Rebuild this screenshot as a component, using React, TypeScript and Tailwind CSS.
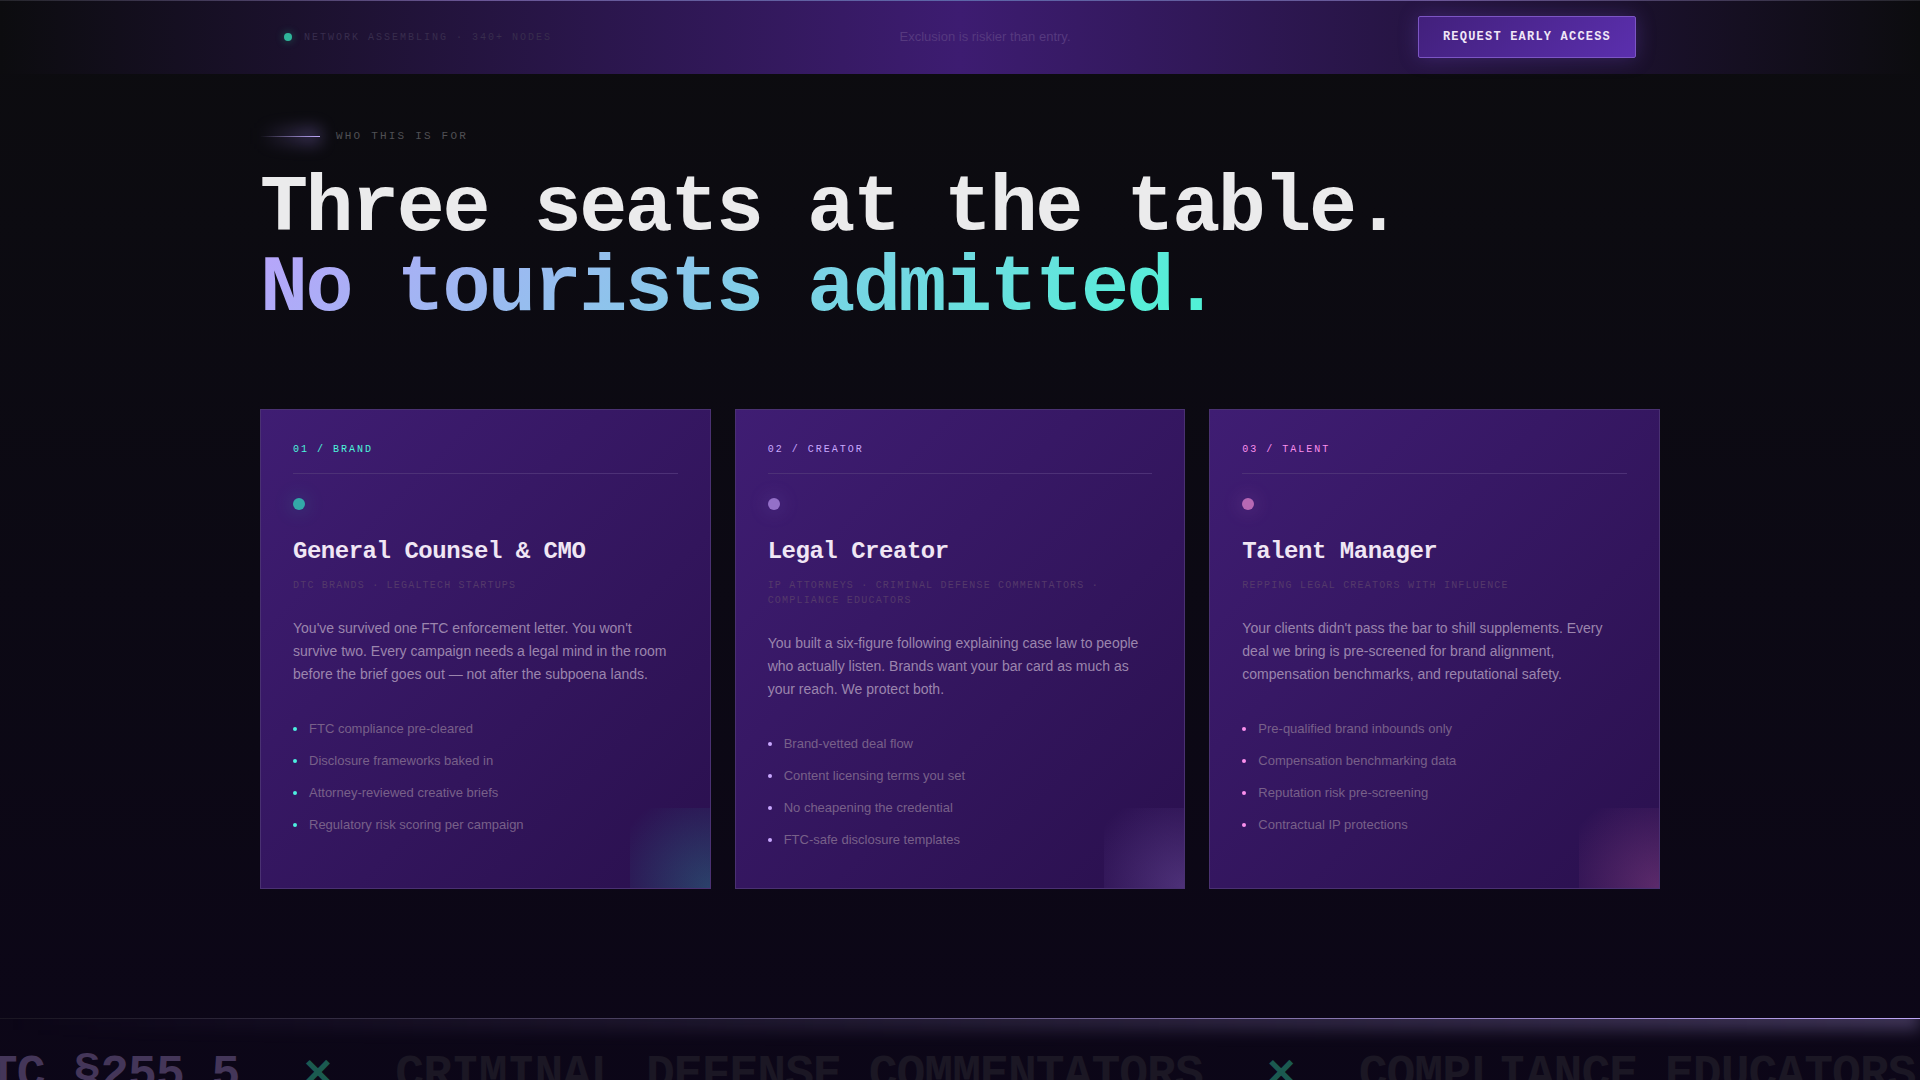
type Seat = {
  kicker: string
  title: string
  audience: string
  body: string
  points: string[]
  text: string
  dot: string
  bullet: string
  glow: string
}

const seats: Seat[] = [
  {
    kicker: "01 / BRAND",
    title: "General Counsel & CMO",
    audience: "DTC Brands · LegalTech Startups",
    body: "You've survived one FTC enforcement letter. You won't survive two. Every campaign needs a legal mind in the room before the brief goes out — not after the subpoena lands.",
    points: [
      "FTC compliance pre-cleared",
      "Disclosure frameworks baked in",
      "Attorney-reviewed creative briefs",
      "Regulatory risk scoring per campaign",
    ],
    text: "text-[#4cf5dc]",
    dot: "bg-[#33a9a8] shadow-[0_0_20px_rgba(45,212,191,0.3)]",
    bullet: "bg-[#4cf0e0]",
    glow: "bg-[radial-gradient(circle_at_bottom_right,#2dd4bf,transparent_90%)]",
  },
  {
    kicker: "02 / CREATOR",
    title: "Legal Creator",
    audience: "IP Attorneys · Criminal Defense Commentators · Compliance Educators",
    body: "You built a six-figure following explaining case law to people who actually listen. Brands want your bar card as much as your reach. We protect both.",
    points: [
      "Brand-vetted deal flow",
      "Content licensing terms you set",
      "No cheapening the credential",
      "FTC-safe disclosure templates",
    ],
    text: "text-[#c9a8ff]",
    dot: "bg-[#9470c8] shadow-[0_0_20px_rgba(167,139,250,0.3)]",
    bullet: "bg-[#c9a8ff]",
    glow: "bg-[radial-gradient(circle_at_bottom_right,#b794f6,transparent_90%)]",
  },
  {
    kicker: "03 / TALENT",
    title: "Talent Manager",
    audience: "Repping Legal Creators With Influence",
    body: "Your clients didn't pass the bar to shill supplements. Every deal we bring is pre-screened for brand alignment, compensation benchmarks, and reputational safety.",
    points: [
      "Pre-qualified brand inbounds only",
      "Compensation benchmarking data",
      "Reputation risk pre-screening",
      "Contractual IP protections",
    ],
    text: "text-[#fb90ec]",
    dot: "bg-[#b768b4] shadow-[0_0_20px_rgba(240,138,230,0.3)]",
    bullet: "bg-[#fb90ec]",
    glow: "bg-[radial-gradient(circle_at_bottom_right,#f07ac0,transparent_90%)]",
  },
]

const ticker = [
  { label: "FTC §255.5", color: "text-[#443659]" },
  { label: "CRIMINAL DEFENSE COMMENTATORS", color: "text-[#1b1724]" },
  { label: "COMPLIANCE EDUCATORS", color: "text-[#1b1724]" },
]

const mono = "font-['Liberation_Mono',monospace]"

function TopBar() {
  return (
    <header className="sticky top-0 z-10 bg-[linear-gradient(90deg,#0c0c0f_0%,#3d1c71_50%,#0c0c0f_100%)]">
      <div className="absolute inset-x-0 top-0 h-px bg-[linear-gradient(90deg,#26262c,#6a5696_25%,#5c66a8_50%,#6a5696_75%,#26262c)]" />
      <div className="mx-auto flex max-w-[1400px] items-center justify-between px-6 py-4">
        <div className="flex items-center gap-3">
          <span className="size-2 rounded-full bg-[#2fb59a] shadow-[0_0_8px_rgba(45,212,160,0.4)]" />
          <span className={`${mono} text-[10px] tracking-[0.2em] text-[#382d4d]`}>NETWORK ASSEMBLING · 340+ NODES</span>
        </div>
        <p className="text-[13px] text-[#56397f]">Exclusion is riskier than entry.</p>
        <button
          type="button"
          className={`${mono} rounded-xs border border-[#7c55c4] bg-linear-135 from-[#42207c] to-[#5b2fae] px-6 py-3 text-xs font-bold tracking-widest text-[#f0e6f7] shadow-[0_0_20px_rgba(139,92,246,0.25)]`}
        >
          REQUEST EARLY ACCESS
        </button>
      </div>
    </header>
  )
}

function SeatCard({ seat }: { seat: Seat }) {
  return (
    <article className="relative overflow-hidden border border-[#4a3172] bg-linear-135 from-[#3f1d73] to-[#2a104e] p-8">
      <div className={`${mono} ${seat.text} border-b border-[#4d3177] pb-4 text-[10px] leading-[15px] tracking-[0.2em]`}>
        {seat.kicker}
      </div>
      <div className={`${seat.dot} mt-6 size-3 rounded-full`} />
      <h3 className={`${mono} mt-6 text-2xl leading-9 font-bold tracking-[-0.02em] text-[#f0e6f4]`}>{seat.title}</h3>
      <p className={`${mono} mt-2 text-[10px] leading-[15px] tracking-[0.12em] text-[#54396a] uppercase`}>{seat.audience}</p>
      <p className="mt-6 text-[14px] leading-[23px] text-[#9b85ad]">{seat.body}</p>
      <ul className="mt-[27px]">
        {seat.points.map((point) => (
          <li key={point} className="flex items-center gap-3 py-1.5 text-[13px] leading-5 text-[#786089]">
            <span className={`${seat.bullet} size-1 rounded-full`} />
            {point}
          </li>
        ))}
      </ul>
      <div className={`${seat.glow} absolute right-0 bottom-0 size-20 opacity-25`} />
    </article>
  )
}

function Ticker() {
  return (
    <div className="relative overflow-hidden">
      <div className="absolute inset-x-0 -top-3 h-6 bg-linear-to-r from-transparent to-[#b9a3f0]/30 blur-[8px]" />
      <div className="relative h-px bg-linear-to-r from-[#1a1622] to-[#bda6f5]" />
      <div className={`${mono} -ml-[39px] flex gap-16 py-8 text-5xl leading-none font-bold tracking-[-0.02em] whitespace-nowrap`}>
        {ticker.map((item) => (
          <span key={item.label} className="flex gap-16">
            <span className={item.color}>{item.label}</span>
            <span className="text-[#1b5a50]">×</span>
          </span>
        ))}
      </div>
    </div>
  )
}

export default function App() {
  return (
    <main className="min-h-screen bg-linear-to-b from-[#0c0c0f] to-[#0c0618] font-['Liberation_Sans',sans-serif]">
      <TopBar />
      <section className="mx-auto max-w-[1400px] pt-[53px] pb-[129px]">
        <div className="mb-6 flex items-center gap-4">
          <span className="relative h-px w-15 bg-linear-to-r from-transparent to-[#c4b0fb]">
            <span className="absolute inset-x-0 -top-2 h-4 bg-linear-to-r from-transparent to-[#a78bfa]/35 blur-[8px]" />
          </span>
          <span className={`${mono} text-[11px] leading-[18px] tracking-[0.2em] text-[#505054]`}>WHO THIS IS FOR</span>
        </div>
        <h2 className={`${mono} text-[80px] leading-none font-bold tracking-[-0.03em] text-[#ebebec]`}>
          Three seats at the table.
          <br />
          <span className="bg-[linear-gradient(135deg,#b8a4fb,#4cf5d4)] bg-clip-text text-transparent">No tourists admitted.</span>
        </h2>
        <div className="mt-20 grid grid-cols-3 gap-6">
          {seats.map((seat) => (
            <SeatCard key={seat.kicker} seat={seat} />
          ))}
        </div>
      </section>
      <Ticker />
    </main>
  )
}
